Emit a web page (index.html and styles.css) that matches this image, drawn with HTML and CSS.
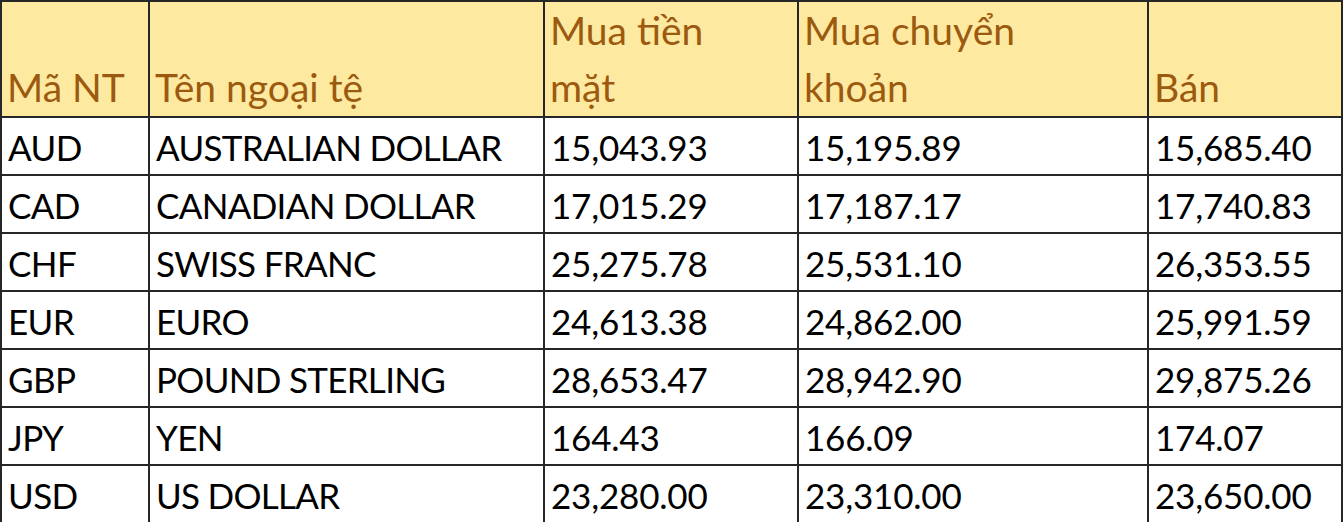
FILE: index.html
```html
<!DOCTYPE html>
<html lang="vi">
<head>
<meta charset="utf-8">
<title>Tỷ giá ngoại tệ</title>
<link rel="stylesheet" href="styles.css">
</head>
<body>
<table class="rates">
  <colgroup>
    <col class="c-code">
    <col class="c-name">
    <col class="c-cash">
    <col class="c-transfer">
    <col class="c-sell">
  </colgroup>
  <thead>
    <tr class="head-row">
      <th>Mã NT</th>
      <th>Tên ngoại tệ</th>
      <th>Mua tiền<br>mặt</th>
      <th>Mua chuyển<br>khoản</th>
      <th>Bán</th>
    </tr>
  </thead>
  <tbody>
    <tr><td class="code">AUD</td><td class="name">AUSTRALIAN DOLLAR</td><td>15,043.93</td><td>15,195.89</td><td>15,685.40</td></tr>
    <tr><td class="code">CAD</td><td class="name">CANADIAN DOLLAR</td><td>17,015.29</td><td>17,187.17</td><td>17,740.83</td></tr>
    <tr><td class="code">CHF</td><td class="name">SWISS FRANC</td><td>25,275.78</td><td>25,531.10</td><td>26,353.55</td></tr>
    <tr><td class="code">EUR</td><td class="name">EURO</td><td>24,613.38</td><td>24,862.00</td><td>25,991.59</td></tr>
    <tr><td class="code">GBP</td><td class="name">POUND STERLING</td><td>28,653.47</td><td>28,942.90</td><td>29,875.26</td></tr>
    <tr><td class="code">JPY</td><td class="name">YEN</td><td>164.43</td><td>166.09</td><td>174.07</td></tr>
    <tr><td class="code">USD</td><td class="name">US DOLLAR</td><td>23,280.00</td><td>23,310.00</td><td>23,650.00</td></tr>
  </tbody>
</table>
</body>
</html>
```

FILE: styles.css
```css
html, body {
  margin: 0;
  padding: 0;
  background: #ffffff;
}

.rates {
  border-collapse: collapse;
  table-layout: fixed;
  width: 1341px;
  font-family: Lato, "Noto Sans", sans-serif;
  font-size: 35px;
  color: #000000;
}

.c-code { width: 148px; }
.c-name { width: 395px; }
.c-cash { width: 254px; }
.c-transfer { width: 350px; }
.c-sell { width: 194px; }

.rates th,
.rates td {
  border: 2px solid #262626;
  text-align: left;
  vertical-align: bottom;
  padding: 0 4px 7px 6px;
  white-space: nowrap;
  overflow: hidden;
}

.rates th {
  background: #fdeaa0;
  color: #9c5a10;
  font-weight: normal;
  font-size: 39px;
  line-height: 57px;
  height: 106px;
  padding-bottom: 0;
  padding-left: 5px;
}

.rates td {
  line-height: 40px;
  height: 49px;
  letter-spacing: -0.2px;
}

.rates td.code {
  letter-spacing: -0.6px;
}

.rates td.name {
  letter-spacing: -0.7px;
}
```
